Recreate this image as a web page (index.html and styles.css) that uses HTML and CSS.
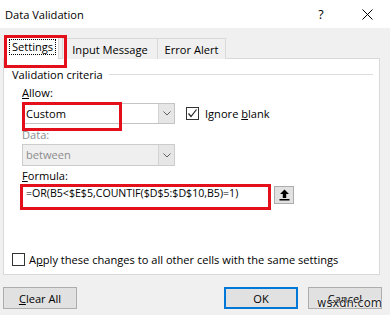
FILE: index.html
```html
<!DOCTYPE html>
<html>
<head>
  <meta charset="utf-8" />
  <title>Data Validation</title>
  <link rel="stylesheet" href="styles.css">
</head>
<body>
  <div class="dialog">
    <!-- title bar -->
    <div class="titlebar">
      <span class="title">Data Validation</span>
      <span class="caption-btn">?</span>
      <span class="caption-btn">
        <svg width="11" height="11" viewBox="0 0 11 11"><path d="M0.5 0.5 L10.5 10.5 M10.5 0.5 L0.5 10.5" stroke="#000" stroke-width="1" fill="none"/></svg>
      </span>
    </div>

    <!-- tabs -->
    <div class="tabs">
      <div class="tab active"><span class="focus">Settings</span></div>
      <div class="tab">Input Message</div>
      <div class="tab">Error Alert</div>
    </div>

    <div class="panel">
      <div class="group-head">
        <span>Validation criteria</span>
        <span class="group-line"></span>
      </div>

      <div class="criteria">
        <div class="label"><u>A</u>llow:</div>
        <div class="row">
          <div class="combo marked">
            <div class="combo-field">Custom</div>
            <div class="combo-btn">
              <svg width="8" height="5" viewBox="0 0 8 5"><polyline points="0.5,0.5 4,4 7.5,0.5" stroke="#606060" fill="none"/></svg>
            </div>
          </div>
          <label class="check">
            <span class="box">
              <svg width="11" height="11" viewBox="0 0 11 11"><polyline points="1.5,5.5 4,8.5 9.5,1.5" stroke="#222" stroke-width="1.2" fill="none"/></svg>
            </span>
            <span>Ignore <u>b</u>lank</span>
          </label>
        </div>

        <div class="label disabled">Data:</div>
        <div class="combo off">
          <div class="combo-field">between</div>
          <div class="combo-btn">
            <svg width="8" height="5" viewBox="0 0 8 5"><polyline points="0.5,0.5 4,4 7.5,0.5" stroke="#606060" fill="none"/></svg>
          </div>
        </div>

        <div class="label formula-label"><u>F</u>ormula:</div>
        <div class="formula-row">
          <div class="formula">=OR(B5&lt;$E$5,COUNTIF($D$5:$D$10,B5)=1)</div>
          <div class="collapse-btn">
            <svg width="11" height="12" viewBox="0 0 11 12"><path d="M5.5 0.5 L10 5 H7.2 V9 H3.8 V5 H1 Z" fill="#000"/><rect x="0.5" y="10" width="10" height="1.5" fill="#000"/></svg>
          </div>
        </div>
      </div>

      <label class="check apply">
        <span class="box"></span>
        <span>A<u>p</u>ply these changes to all other cells with the same settings</span>
      </label>
    </div>

    <div class="footer">
      <button class="btn"><u>C</u>lear All</button>
      <div class="footer-right">
        <button class="btn default">OK</button>
        <button class="btn">Cancel</button>
      </div>
    </div>

    <div class="watermark">wsxdn.com</div>
  </div>
</body>
</html>
```

FILE: styles.css
```css
* {
  margin: 0;
  padding: 0;
  box-sizing: border-box;
}

body {
  font-family: "Open Sans", "Noto Sans", sans-serif;
  font-size: 11.1px;
  color: #000;
  background: #f0f0f0;
}

.dialog {
  position: relative;
  width: 390px;
  height: 315px;
  background: #f0f0f0;
  overflow: hidden;
}

u {
  text-decoration: underline;
  text-underline-offset: 1px;
}

/* title bar */
.titlebar {
  display: flex;
  align-items: center;
  height: 28px;
  background: #fff;
  padding-left: 5px;
}

.title {
  flex: 1;
}

.caption-btn {
  width: 46px;
  height: 28px;
  display: flex;
  align-items: center;
  justify-content: center;
  font-size: 12.5px;
}

/* tabs */
.tabs {
  display: flex;
  align-items: flex-end;
  height: 31px;
  margin-bottom: -1px;
  padding-left: 6px;
}

.tab {
  height: 21px;
  display: flex;
  align-items: center;
  justify-content: center;
  border: 1px solid #d9d9d9;
  border-bottom: none;
  background: #f0f0f0;
}

.tab:nth-child(2) {
  width: 96px;
  margin-left: 3px;
}

.tab:nth-child(3) {
  width: 68px;
  border-left: none;
}

.tab.active {
  position: relative;
  z-index: 1;
  width: 53px;
  height: 23px;
  background: #fff;
  padding-bottom: 2px;
}

.tab.active::after {
  content: "";
  position: absolute;
  left: -3px;
  top: -2px;
  width: 57px;
  height: 27px;
  border: 3px solid #e3101c;
}

.focus {
  border: 1px dotted #000;
  padding: 0 2px;
  line-height: 14px;
}

/* panel */
.panel {
  margin-left: 3px;
  width: 377px;
  height: 217px;
  background: #fff;
  border: 1px solid #d9d9d9;
  padding: 7px 0 0 8px;
}

.group-head {
  display: flex;
  align-items: center;
  height: 16px;
}

.group-line {
  flex: 1;
  height: 1px;
  background: #dcdcdc;
  margin: 0 6px 0 6px;
}

.criteria {
  padding-left: 10px;
}

.label {
  height: 16px;
  line-height: 16px;
  margin-top: 3px;
}

.label.disabled {
  color: #8c8c8c;
}

.row {
  display: flex;
  align-items: center;
  margin-top: 2px;
}

.combo {
  position: relative;
  display: flex;
  width: 153px;
  height: 21px;
  border: 1px solid #c4c4c4;
  background: #fff;
}

.combo-field {
  flex: 1;
  padding-left: 3px;
  line-height: 19px;
}

.combo-btn {
  width: 16px;
  display: flex;
  align-items: center;
  justify-content: center;
  background: #e6e6e6;
  border-left: 1px solid #d4d4d4;
}

.combo.marked::after {
  content: "";
  position: absolute;
  left: -1px;
  top: -2px;
  width: 94px;
  height: 23px;
  border: 3px solid #e3101c;
}

.combo.off {
  margin-top: 1px;
  height: 22px;
  border-color: #cccccc;
  background: #efefef;
  color: #8c8c8c;
}

.combo.off .combo-field {
  line-height: 20px;
}

.combo.off .combo-btn {
  background: #e6e6e6;
}

.formula-label {
  margin-top: 2px;
}

.check {
  display: flex;
  align-items: center;
  gap: 6px;
  margin-left: 11px;
}

.box {
  width: 13px;
  height: 13px;
  border: 1px solid #333;
  background: #fff;
  display: flex;
  align-items: center;
  justify-content: center;
}

.formula-row {
  display: flex;
  align-items: flex-end;
  height: 20px;
}

.formula {
  position: relative;
  width: 251px;
  height: 20px;
  line-height: 19px;
  padding-left: 4px;
  background: #fff;
  font-size: 10.6px;
}

.formula::after {
  content: "";
  position: absolute;
  left: -2px;
  top: 0;
  width: 245px;
  height: 20px;
  border: 3px solid #e3101c;
}

.collapse-btn {
  width: 20px;
  height: 18px;
  margin-left: 1px;
  display: flex;
  align-items: center;
  justify-content: center;
  background: #e1e1e1;
  border: 1px solid #adadad;
}

.check.apply {
  margin-left: 0;
  margin-top: 48px;
  gap: 4px;
}

/* buttons */
.footer {
  display: flex;
  justify-content: space-between;
  margin-top: 12px;
  padding: 0 8px 0 3px;
}

.footer-right {
  display: flex;
  gap: 10px;
}

.btn {
  width: 74px;
  height: 22px;
  font-family: inherit;
  font-size: 11.1px;
  color: #000;
  background: #e1e1e1;
  border: 1px solid #adadad;
}

.btn.default {
  border: 2px solid #0078d7;
}

.watermark {
  position: absolute;
  left: 317px;
  top: 296px;
  font-family: "DejaVu Sans", sans-serif;
  font-size: 11.5px;
  color: #222;
  text-shadow: 0 0 2px #fff, 0 0 2px #fff;
}
```
